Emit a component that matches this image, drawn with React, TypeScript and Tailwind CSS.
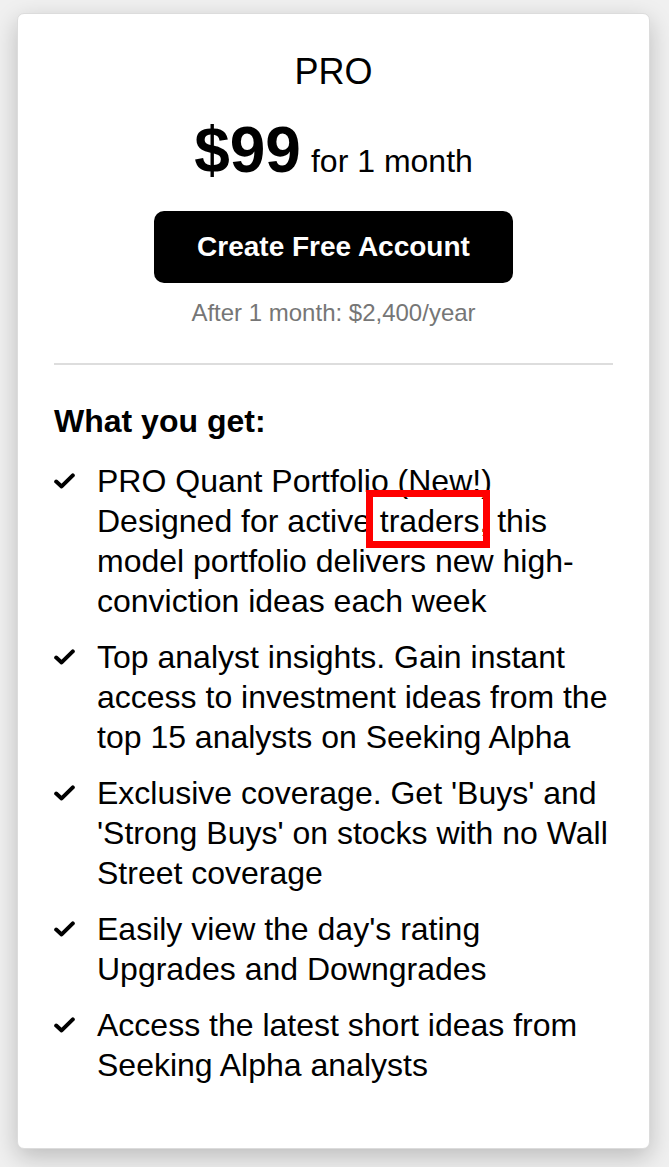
const FEATURES: React.ReactNode[] = [
  <>
    PRO Quant Portfolio (New!) Designed for active{" "}
    <span className="relative">
      traders,
      <span className="pointer-events-none absolute -left-[14px] -right-[2px] -top-[13px] -bottom-[9px] border-[7px] border-[#ff0000]" />
    </span>{" "}
    this model portfolio delivers new high-conviction ideas each week
  </>,
  "Top analyst insights. Gain instant access to investment ideas from the top 15 analysts on Seeking Alpha",
  "Exclusive coverage. Get 'Buys' and 'Strong Buys' on stocks with no Wall Street coverage",
  "Easily view the day's rating Upgrades and Downgrades",
  "Access the latest short ideas from Seeking Alpha analysts",
];

function Check() {
  return (
    <svg width="21" height="16" viewBox="0 0 21 16" className="mt-[12px] shrink-0">
      <path d="M2.2 8.6 L7.6 13.4 L18.8 2.4" fill="none" stroke="#000" strokeWidth="4" strokeLinecap="round" strokeLinejoin="round" />
    </svg>
  );
}

export default function App() {
  return (
    <div className="min-h-[1167px] bg-[#f0f0f0] pt-[13px] font-['Liberation_Sans',Arial,sans-serif] text-black">
      <div className="ml-[17px] w-[633px] h-[1136px] rounded-[7px] border border-[#dcdcdc] bg-white px-[36px] pt-[38px] shadow-[0_8px_24px_rgba(0,0,0,0.22)]">
        <div className="text-center text-[36px] leading-[40px]">PRO</div>
        <div className="mt-[26px] flex items-baseline justify-center gap-[10px]">
          <span className="text-[64px] font-bold leading-none">$99</span>
          <span className="text-[32px] leading-none">for 1 month</span>
        </div>
        <div className="mt-[29px] flex justify-center">
          <button className="h-[72px] w-[359px] rounded-[10px] bg-black text-[28px] font-bold text-white">
            Create Free Account
          </button>
        </div>
        <p className="mt-[14px] text-center text-[24px] leading-[32px] text-[#767676]">After 1 month: $2,400/year</p>
        <div className="mt-[34px] h-[2px] bg-[#dddddd]" />
        <h3 className="mt-[36px] text-[32px] font-bold leading-[40px]">What you get:</h3>
        <ul className="mt-[20px] flex flex-col gap-[16px]">
          {FEATURES.map((f, i) => (
            <li key={i} className="flex">
              <div className="w-[43px] shrink-0">
                <Check />
              </div>
              <div className="text-[32px] leading-[40px]">{f}</div>
            </li>
          ))}
        </ul>
      </div>
    </div>
  );
}
